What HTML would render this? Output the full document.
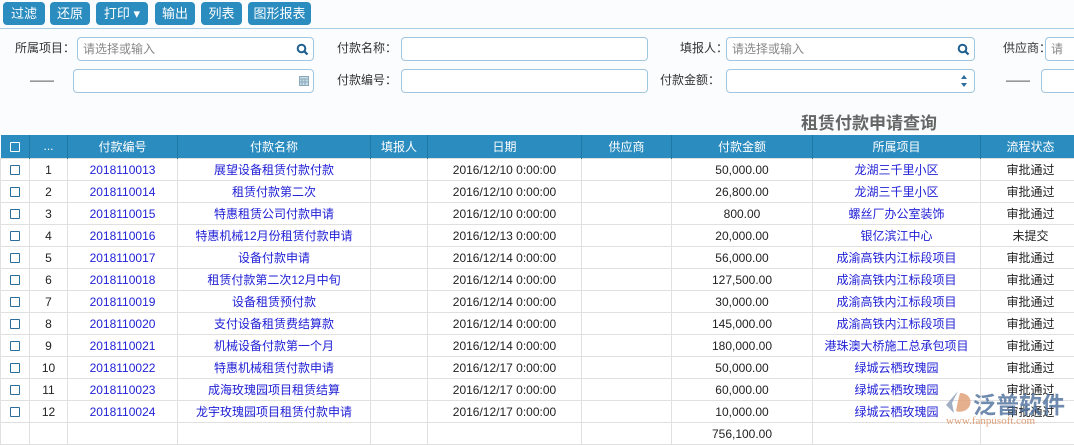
<!DOCTYPE html><html><head><meta charset="utf-8"><style>
*{box-sizing:border-box;margin:0;padding:0}
body{width:1074px;height:435px;overflow:hidden;background:#fafcfd;font-family:"Liberation Sans","Noto Sans CJK SC",sans-serif;font-size:12px;color:#333;position:relative}
.btn{position:absolute;top:2px;height:23px;background:#2b8cbf;color:#fff;border-radius:4px;font-size:13px;line-height:23px;text-align:center}
.hr{position:absolute;left:0;top:28px;width:1074px;height:1px;background:#a9cde2}
.lbl{position:absolute;font-size:12px;color:#333;line-height:24px}
.inp{position:absolute;height:24px;border:1px solid #9fc6df;border-radius:4px;background:#fff;color:#888;font-size:12px;line-height:22px;padding-left:5px}
.inp svg{position:absolute;right:4px;top:5px}
.title{position:absolute;left:801px;top:109px;font-size:17px;font-weight:bold;color:#666}
table{position:absolute;left:0;top:135px;border-collapse:collapse;table-layout:fixed;width:1080px}
th{background:#2b8cbf;color:#fff;font-weight:normal;height:23px;border-right:1px solid #1f77a5;font-size:12px}
td{height:22px;border:1px solid #e0e0e0;text-align:center;background:#fff;font-size:12px;color:#222;padding-top:1px}
td.l{color:#2121d6}
.cb{display:inline-block;width:10px;height:10px;border:1.5px solid #2b6d9a;border-radius:1px;vertical-align:middle;background:#fff}
th .cb{border-color:#fff;background:transparent}
</style></head><body>
<div class="btn" style="left:3px;width:42px">过滤</div>
<div class="btn" style="left:50px;width:40px">还原</div>
<div class="btn" style="left:96px;width:52px">打印 ▾</div>
<div class="btn" style="left:155px;width:40px">输出</div>
<div class="btn" style="left:201px;width:41px">列表</div>
<div class="btn" style="left:248px;width:63px">图形报表</div>
<div class="hr"></div>
<div class="lbl" style="left:15px;top:36px">所属项目：</div>
<div class="inp" style="left:77px;top:37px;width:237px">请选择或输入<svg width="13" height="13" viewBox="0 0 13 13"><circle cx="5.5" cy="5.5" r="3.8" fill="none" stroke="#1f5f8f" stroke-width="2"/><path d="M8.3 8.3L11.5 11.5" stroke="#1f5f8f" stroke-width="2.2"/></svg></div>
<div class="lbl" style="left:337px;top:36px">付款名称：</div>
<div class="inp" style="left:401px;top:37px;width:247px"></div>
<div class="lbl" style="left:680px;top:36px">填报人：</div>
<div class="inp" style="left:726px;top:37px;width:249px">请选择或输入<svg width="13" height="13" viewBox="0 0 13 13"><circle cx="5.5" cy="5.5" r="3.8" fill="none" stroke="#1f5f8f" stroke-width="2"/><path d="M8.3 8.3L11.5 11.5" stroke="#1f5f8f" stroke-width="2.2"/></svg></div>
<div class="lbl" style="left:1003px;top:36px">供应商：</div>
<div class="inp" style="left:1045px;top:37px;width:60px">请</div>
<div class="lbl" style="left:30px;top:68px">——</div>
<div class="inp" style="left:73px;top:69px;width:241px"><svg width="10" height="11" viewBox="0 0 10 11"><rect x="0.5" y="1.5" width="9" height="9" fill="#c8dbe6" stroke="#8aa9bb"/><path d="M0 4h10M3 4v7M6 4v7M0 7h10" stroke="#8aa9bb"/></svg></div>
<div class="lbl" style="left:337px;top:68px">付款编号：</div>
<div class="inp" style="left:401px;top:69px;width:247px"></div>
<div class="lbl" style="left:660px;top:68px">付款金额：</div>
<div class="inp" style="left:726px;top:69px;width:249px"><svg width="8" height="14" viewBox="0 0 8 14" style="top:4px;right:6px"><path d="M4 1L7 5H1Z M4 13L7 9H1Z" fill="#2b6d9a"/></svg></div>
<div class="lbl" style="left:1006px;top:68px">——</div>
<div class="inp" style="left:1041px;top:69px;width:60px"></div>
<div class="title">租赁付款申请查询</div>
<table>
<colgroup><col style="width:29px"><col style="width:38px"><col style="width:110px"><col style="width:193px"><col style="width:57px"><col style="width:154px"><col style="width:90px"><col style="width:141px"><col style="width:168px"><col style="width:100px"></colgroup>
<tr><th><span class="cb"></span></th><th>...</th><th>付款编号</th><th>付款名称</th><th>填报人</th><th>日期</th><th>供应商</th><th>付款金额</th><th>所属项目</th><th>流程状态</th></tr>
<tr><td><span class="cb"></span></td><td>1</td><td class="l">2018110013</td><td class="l">展望设备租赁付款付款</td><td></td><td>2016/12/10 0:00:00</td><td></td><td>50,000.00</td><td class="l">龙湖三千里小区</td><td>审批通过</td></tr>
<tr><td><span class="cb"></span></td><td>2</td><td class="l">2018110014</td><td class="l">租赁付款第二次</td><td></td><td>2016/12/10 0:00:00</td><td></td><td>26,800.00</td><td class="l">龙湖三千里小区</td><td>审批通过</td></tr>
<tr><td><span class="cb"></span></td><td>3</td><td class="l">2018110015</td><td class="l">特惠租赁公司付款申请</td><td></td><td>2016/12/10 0:00:00</td><td></td><td>800.00</td><td class="l">螺丝厂办公室装饰</td><td>审批通过</td></tr>
<tr><td><span class="cb"></span></td><td>4</td><td class="l">2018110016</td><td class="l">特惠机械12月份租赁付款申请</td><td></td><td>2016/12/13 0:00:00</td><td></td><td>20,000.00</td><td class="l">银亿滨江中心</td><td>未提交</td></tr>
<tr><td><span class="cb"></span></td><td>5</td><td class="l">2018110017</td><td class="l">设备付款申请</td><td></td><td>2016/12/14 0:00:00</td><td></td><td>56,000.00</td><td class="l">成渝高铁内江标段项目</td><td>审批通过</td></tr>
<tr><td><span class="cb"></span></td><td>6</td><td class="l">2018110018</td><td class="l">租赁付款第二次12月中旬</td><td></td><td>2016/12/14 0:00:00</td><td></td><td>127,500.00</td><td class="l">成渝高铁内江标段项目</td><td>审批通过</td></tr>
<tr><td><span class="cb"></span></td><td>7</td><td class="l">2018110019</td><td class="l">设备租赁预付款</td><td></td><td>2016/12/14 0:00:00</td><td></td><td>30,000.00</td><td class="l">成渝高铁内江标段项目</td><td>审批通过</td></tr>
<tr><td><span class="cb"></span></td><td>8</td><td class="l">2018110020</td><td class="l">支付设备租赁费结算款</td><td></td><td>2016/12/14 0:00:00</td><td></td><td>145,000.00</td><td class="l">成渝高铁内江标段项目</td><td>审批通过</td></tr>
<tr><td><span class="cb"></span></td><td>9</td><td class="l">2018110021</td><td class="l">机械设备付款第一个月</td><td></td><td>2016/12/14 0:00:00</td><td></td><td>180,000.00</td><td class="l">港珠澳大桥施工总承包项目</td><td>审批通过</td></tr>
<tr><td><span class="cb"></span></td><td>10</td><td class="l">2018110022</td><td class="l">特惠机械租赁付款申请</td><td></td><td>2016/12/17 0:00:00</td><td></td><td>50,000.00</td><td class="l">绿城云栖玫瑰园</td><td>审批通过</td></tr>
<tr><td><span class="cb"></span></td><td>11</td><td class="l">2018110023</td><td class="l">成海玫瑰园项目租赁结算</td><td></td><td>2016/12/17 0:00:00</td><td></td><td>60,000.00</td><td class="l">绿城云栖玫瑰园</td><td>审批通过</td></tr>
<tr><td><span class="cb"></span></td><td>12</td><td class="l">2018110024</td><td class="l">龙宇玫瑰园项目租赁付款申请</td><td></td><td>2016/12/17 0:00:00</td><td></td><td>10,000.00</td><td class="l">绿城云栖玫瑰园</td><td>审批通过</td></tr>
<tr><td></td><td></td><td></td><td></td><td></td><td></td><td></td><td>756,100.00</td><td></td><td></td></tr>
</table>
<svg style="position:absolute;left:944px;top:389px" width="30" height="26" viewBox="0 0 30 26"><path d="M14 2L2 16L10 24L8 14Z" fill="#8a9bb5" opacity=".8"/><path d="M16 4C24 4 28 10 26 16C24 22 16 24 12 22L14 12Z" fill="#e0a27a" opacity=".85"/></svg>
<div style="position:absolute;left:973px;top:386px;font-size:23px;font-weight:bold;color:#4a6d9a;opacity:.8;white-space:nowrap;width:110px">泛普软件</div>
<div style="position:absolute;left:946px;top:415px;font-size:11px;font-family:'Liberation Serif',serif;color:#d98a5a;opacity:.8;white-space:nowrap">www.fanpusoft.com</div>
</body></html>
